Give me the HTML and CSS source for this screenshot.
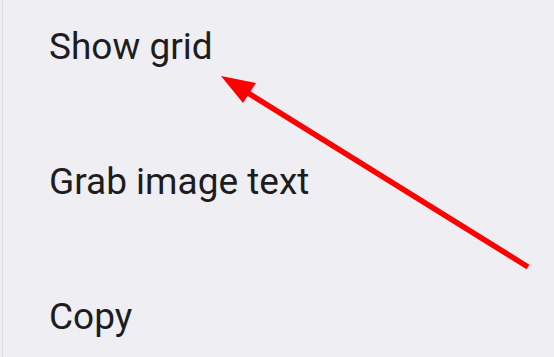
FILE: index.html
```html
<!DOCTYPE html>
<html>
<head>
<meta charset="utf-8">
<link rel="stylesheet" href="styles.css">
</head>
<body>
<div class="menu">
  <div class="item">Show grid</div>
  <div class="item">Grab image text</div>
  <div class="item">Copy</div>
</div>
<svg class="arrow" width="554" height="357" viewBox="0 0 554 357">
  <line x1="528" y1="267" x2="240" y2="88" stroke="#ff0000" stroke-width="5.5"/>
  <polygon points="221,76 256,83 243,103" fill="#ff0000"/>
</svg>
</body>
</html>
```
FILE: styles.css
```css
html, body {
  margin: 0;
  padding: 0;
  width: 554px;
  height: 357px;
  overflow: hidden;
  background: #efeef3;
}
body {
  position: relative;
}
.menu {
  box-sizing: border-box;
  height: 357px;
  border-left: 1px solid #dcdbe0;
  margin-left: 2px;
  display: flex;
  flex-direction: column;
  gap: 91px;
  padding: 25px 0 0 46px;
  font-family: Roboto, "Noto Sans", sans-serif;
  font-size: 37px;
  color: #1d1c21;
}
.item {
  line-height: 44px;
  height: 44px;
  flex: none;
}
.arrow {
  position: absolute;
  left: 0;
  top: 0;
}
```
